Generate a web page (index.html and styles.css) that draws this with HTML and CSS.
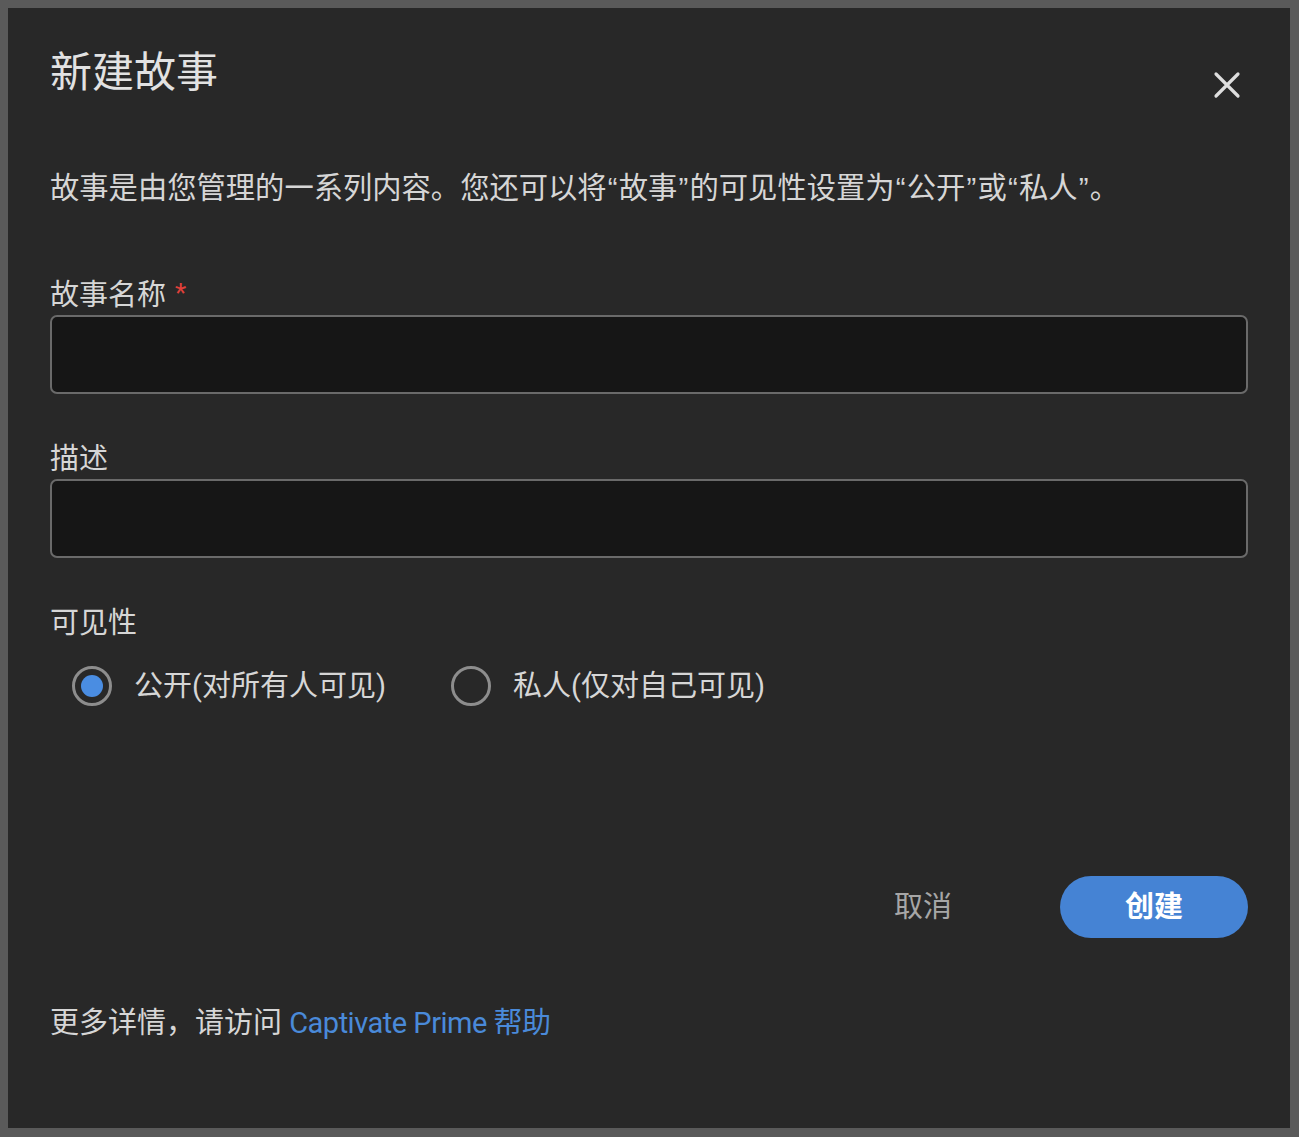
FILE: index.html
```html
<!DOCTYPE html>
<html lang="zh-CN">
<head>
<meta charset="utf-8">
<title>新建故事</title>
<link rel="stylesheet" href="styles.css">
</head>
<body>
<div class="dialog">
  <div class="header">
    <h1 class="title">新建故事</h1>
    <button class="close" aria-label="关闭">
      <svg width="28" height="28" viewBox="0 0 28 28"><path d="M3 3 L25 25 M25 3 L3 25" stroke="#dedede" stroke-width="3.2" stroke-linecap="round" fill="none"/></svg>
    </button>
  </div>
  <p class="desc">故事是由您管理的一系列内容。您还可以将<span class="q">“</span>故事<span class="q">”</span>的可见性设置为<span class="q">“</span>公开<span class="q">”</span>或<span class="q">“</span>私人<span class="q">”</span>。</p>
  <div class="field first">
    <label class="label">故事名称<span class="req">*</span></label>
    <div class="input"></div>
  </div>
  <div class="field">
    <label class="label">描述</label>
    <div class="input"></div>
  </div>
  <div class="field">
    <label class="label">可见性</label>
    <div class="radios">
      <div class="radio-item">
        <span class="radio checked"></span>
        <span class="radio-text">公开(对所有人可见)</span>
      </div>
      <div class="radio-item">
        <span class="radio"></span>
        <span class="radio-text">私人(仅对自己可见)</span>
      </div>
    </div>
  </div>
  <div class="actions">
    <span class="cancel">取消</span>
    <button class="create">创建</button>
  </div>
  <p class="footer">更多详情，请访问 <a class="link">Captivate Prime 帮助</a></p>
</div>
</body>
</html>
```
FILE: styles.css
```css
html, body {
  margin: 0;
  padding: 0;
}
body {
  background: #5a5a5a;
  width: 1299px;
  height: 1137px;
  overflow: hidden;
  font-family: Roboto, "Noto Sans CJK SC", sans-serif;
}
.dialog {
  margin: 8px 9px 9px 8px;
  height: 1120px;
  box-sizing: border-box;
  background: #282828;
  padding: 40px 42px 0 42px;
  display: flex;
  flex-direction: column;
  color: #d4d4d4;
}
.header {
  display: flex;
  justify-content: space-between;
  align-items: flex-start;
}
.title {
  margin: 0;
  font-size: 42px;
  font-weight: 400;
  line-height: 50px;
  color: #e2e2e2;
}
.close {
  margin: 23px 7px 0 0;
  padding: 0;
  width: 28px;
  height: 28px;
  border: 0;
  background: none;
  display: flex;
}
.desc {
  margin: 69px 0 0 0;
  font-size: 29.3px;
  line-height: 40px;
  color: #d6d6d6;
}
.q {
  font-family: "Liberation Sans", sans-serif;
  padding: 0 1.2px;
}
.field {
  display: flex;
  flex-direction: column;
  margin-top: 45px;
}
.field.first {
  margin-top: 65px;
}
.label {
  font-size: 29px;
  line-height: 40px;
  color: #d6d6d6;
  margin-bottom: 0;
}
.req {
  color: #e0403a;
  font-size: 26px;
  margin-left: 9px;
  vertical-align: 3px;
}
.input {
  height: 79px;
  box-sizing: border-box;
  background: #161616;
  border: 2.5px solid #6a6a6a;
  border-radius: 7px;
}
.radios {
  display: flex;
  align-items: center;
  margin-top: 23px;
  margin-left: 22px;
  gap: 65px;
}
.radio-item {
  display: flex;
  align-items: center;
  gap: 22px;
}
.radio {
  width: 40px;
  height: 40px;
  box-sizing: border-box;
  border: 3px solid #8d8d8d;
  border-radius: 50%;
  display: flex;
  align-items: center;
  justify-content: center;
}
.radio.checked::after {
  content: "";
  width: 22px;
  height: 22px;
  border-radius: 50%;
  background: #4a8de2;
}
.radio-text {
  font-size: 29px;
  line-height: 40px;
  color: #d6d6d6;
}
.actions {
  display: flex;
  justify-content: flex-end;
  align-items: center;
  margin-top: 170px;
}
.cancel {
  font-size: 29px;
  line-height: 40px;
  color: #a6a6a6;
  margin-right: 108px;
}
.create {
  width: 188px;
  height: 62px;
  border: 0;
  border-radius: 31px;
  background: #4583d4;
  color: #ffffff;
  font-family: inherit;
  font-size: 29px;
  font-weight: 700;
  line-height: 40px;
  padding: 0;
}
.footer {
  margin: 65px 0 0 0;
  font-size: 29px;
  line-height: 40px;
  color: #d6d6d6;
}
.link {
  color: #4a8ad9;
  letter-spacing: -0.5px;
}
```
